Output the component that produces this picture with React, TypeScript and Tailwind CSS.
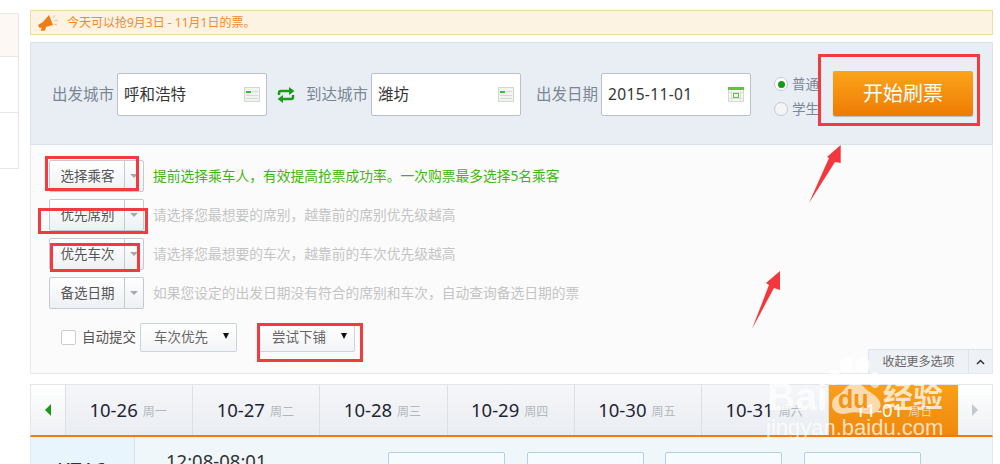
const font = { fontFamily: '"Noto Sans", "Noto Sans CJK SC", sans-serif' };

const FieldIcon = () => (
  <svg width="16" height="15" viewBox="0 0 16 15" className="shrink-0">
    <rect x="0.5" y="0.5" width="15" height="14" fill="#f2f4f0" stroke="#d3d6d3" />
    <rect x="2" y="4" width="5" height="2" fill="#3fb93f" />
    <rect x="8" y="4" width="6" height="1" fill="#d5d9d5" />
    <rect x="2" y="8" width="12" height="1" fill="#d5d9d5" />
    <rect x="2" y="11" width="12" height="1" fill="#d5d9d5" />
  </svg>
);

const CalendarIcon = () => (
  <svg width="16" height="15" viewBox="0 0 16 15" className="shrink-0">
    <rect x="0.5" y="0.5" width="15" height="14" fill="#f5f7f3" stroke="#d5d8d5" />
    <rect x="0" y="0" width="16" height="3" fill="#6dbb4c" />
    <path d="M1 5.500h14M1 11.500h14M3.500 4v10M12.500 4v10" stroke="#dcdfdc" fill="none" />
    <rect x="5.500" y="6.500" width="5" height="4" fill="none" stroke="#6dbb4c" />
  </svg>
);

const SwapIcon = () => (
  <svg width="18" height="16" viewBox="0 0 18 16" className="shrink-0">
    <path d="M2 8V6a2 2 0 0 1 2-2h9" stroke="#1c9a1c" strokeWidth="2.500" fill="none" />
    <path d="M12 0l5.500 4L12 8z" fill="#1c9a1c" />
    <path d="M16 8v2a2 2 0 0 1-2 2H5" stroke="#1c9a1c" strokeWidth="2.500" fill="none" />
    <path d="M6 8l-5.500 4L6 16z" fill="#1c9a1c" />
  </svg>
);

const City = ({ value, icon, wide }: { value: string; icon: React.ReactNode; wide?: boolean }) => (
  <div className="flex h-[43px] w-[150px] shrink-0 items-center justify-between rounded-[2px] border border-[#b9c1cc] bg-white pl-[6px] pr-[6px] text-[15.5px] text-[#333]">
    <span className={wide ? "pt-[1px] tracking-[0.35px]" : "pt-[1px]"}>{value}</span>
    {icon}
  </div>
);

const Label = ({ text }: { text: string }) => (
  <span className="w-[65px] shrink-0 whitespace-nowrap text-[15.5px] text-[#7a8694]">{text}</span>
);

const OptionButton = ({ label }: { label: string }) => (
  <div className="flex h-[32px] w-[95px] shrink-0 items-center rounded-[2px] border border-[#c3cad3] bg-gradient-to-b from-white to-[#eef0f3] text-[13.5px] text-[#555]">
    <span className="w-[74px] pl-[1px] text-center">{label}</span>
    <span className="flex h-full flex-1 items-center justify-center border-l border-[#c3cad3]">
      <span className="h-0 w-0 border-x-[4px] border-t-[4px] border-x-transparent border-t-[#a4a9b0]" />
    </span>
  </div>
);

const OptionRow = ({ label, hint, green }: { label: string; hint: string; green?: boolean }) => (
  <div className="flex h-[32px] shrink-0 items-center gap-[9px]">
    <OptionButton label={label} />
    <span className={green ? "text-[13.75px] text-[#43b312]" : "text-[13.75px] text-[#c4c4c4]"}>{hint}</span>
  </div>
);

const Dropdown = ({ label }: { label: string }) => (
  <div className="flex h-[29px] w-[97px] shrink-0 items-center justify-between rounded-[2px] border border-[#cdd3da] bg-gradient-to-b from-white to-[#f3f4f6] pl-[13px] pr-[7px] text-[13.5px] text-[#666]">
    <span>{label}</span>
    <span className="mb-[3px] h-0 w-0 border-x-[3.500px] border-t-[6px] border-x-transparent border-t-[#111]" />
  </div>
);

const days = [
  ["10-26", "周一"],
  ["10-27", "周二"],
  ["10-28", "周三"],
  ["10-29", "周四"],
  ["10-30", "周五"],
  ["10-31", "周六"],
];

const Mark = ({ className }: { className: string }) => (
  <div className={`absolute border-[3px] border-[#f33a3f] ${className}`} />
);

export default function App() {
  return (
    <div style={font} className="relative flex h-[464px] w-[1000px] overflow-hidden bg-white">
      {/* Left nav edge */}
      <div className="mt-[13px] h-[156px] w-[19px] shrink-0 rounded-tr-[2px] border-b border-r border-t border-[#e6e6e6]">
        <div className="h-[43px] border-b border-[#e6e6e6] bg-[#fdf8f3]" />
        <div className="h-[56px] border-b border-[#e6e6e6]" />
      </div>

      <div className="ml-[11px] flex w-[963px] shrink-0 flex-col pt-[10px]">
        {/* Notice */}
        <div className="flex h-[25px] shrink-0 items-center border border-[#efd9ac] bg-[#fdf3e2] pl-[6px] text-[12px] text-[#f5892b]">
          <svg width="22" height="18" viewBox="0 0 22 18" className="mr-[8px] shrink-0">
            <path d="M1 11 6 8 12 1l4 10-7 2-1 3.500-4 .500 .500-3.500-2 .500z" fill="#ee7d16" />
            <path d="M16 4l2-3M17 7l4-1M17 10l3 1" stroke="#f4c08c" fill="none" />
          </svg>
          今天可以抢9月3日 - 11月1日的票。
        </div>

        {/* Search */}
        <div className="mt-[7px] flex h-[103px] shrink-0 items-center border border-[#dbe1e9] bg-[#e9eef5] pl-[21px] pt-[2px]">
          <Label text="出发城市" />
          <City value="呼和浩特" icon={<FieldIcon />} />
          <span className="ml-[10px] mr-[11px]"><SwapIcon /></span>
          <Label text="到达城市" />
          <City value="潍坊" icon={<FieldIcon />} />
          <span className="w-[15px] shrink-0" />
          <Label text="出发日期" />
          <City wide value="2015-11-01" icon={<CalendarIcon />} />
          <div className="ml-[23px] mt-[4px] flex w-[45px] shrink-0 flex-col gap-[11px] overflow-hidden text-[13.5px] text-[#7a8694]">
            <label className="flex h-[14px] items-center gap-[4px] whitespace-nowrap">
              <span className="flex h-[14px] w-[14px] shrink-0 items-center justify-center rounded-full border border-[#c3c9d1] bg-white">
                <span className="h-[7px] w-[7px] rounded-full bg-[#189a18]" />
              </span>
              普通
            </label>
            <label className="flex h-[14px] items-center gap-[4px] whitespace-nowrap">
              <span className="h-[14px] w-[14px] shrink-0 rounded-full border border-[#c3c9d1] bg-[#f4f5f7]" />
              学生
            </label>
          </div>
          <div className="ml-[14px] mt-[-2px] flex h-[45px] w-[140px] shrink-0 items-center justify-center rounded-[2px] bg-gradient-to-b from-[#fba41a] to-[#ee7b02] text-[20px] text-white shadow-[0_1px_1px_rgba(0,0,0,0.2)]">
            开始刷票
          </div>
        </div>

        {/* Options */}
        <div className="relative flex h-[229px] shrink-0 flex-col gap-[7px] border-x border-b border-[#e6eaef] bg-[#fbfbfb] pl-[18px] pt-[15px]">
          <OptionRow green label="选择乘客" hint="提前选择乘车人，有效提高抢票成功率。一次购票最多选择5名乘客" />
          <OptionRow label="优先席别" hint="请选择您最想要的席别，越靠前的席别优先级越高" />
          <OptionRow label="优先车次" hint="请选择您最想要的车次，越靠前的车次优先级越高" />
          <OptionRow label="备选日期" hint="如果您设定的出发日期没有符合的席别和车次，自动查询备选日期的票" />
          <div className="mt-[7px] flex items-center pl-[12px]">
            <span className="h-[15px] w-[15px] shrink-0 rounded-[2px] border border-[#c9ced5] bg-white" />
            <span className="ml-[6px] w-[58px] shrink-0 whitespace-nowrap text-[13.5px] text-[#555]">自动提交</span>
            <Dropdown label="车次优先" />
            <span className="w-[21px] shrink-0" />
            <Dropdown label="尝试下铺" />
          </div>
          <div className="absolute bottom-0 right-0 flex h-[24px] items-center border-l border-t border-[#dfe4ea] bg-[#eef1f5] text-[12px] text-[#666]">
            <span className="flex w-[99px] justify-center">收起更多选项</span>
            <span className="flex h-full w-[24px] items-center justify-center border-l border-[#dfe4ea]">
              <svg width="9" height="6" viewBox="0 0 9 6">
                <path d="M1 5l3.500-3.500L8 5" stroke="#333" strokeWidth="1.500" fill="none" />
              </svg>
            </span>
          </div>
        </div>

        {/* Date strip */}
        <div className="mt-[10px] flex h-[53px] shrink-0 border-x border-b-2 border-t border-[#e3e7ec] border-b-[#f17a0a] bg-gradient-to-b from-[#f5f6f8] to-[#eaedf2]">
          <div className="flex w-[35px] shrink-0 items-center justify-center border-r border-[#dce0e5] bg-gradient-to-b from-white to-[#eff1f4]">
            <span className="h-0 w-0 border-y-[6px] border-r-[6px] border-y-transparent border-r-[#189a18]" />
          </div>
          {days.map(([date, week]) => (
            <div key={date} className="flex w-[127.200px] shrink-0 items-center justify-center gap-[5px] border-r border-[#dce0e5] pr-[2px]">
              <span className="text-[18.5px] text-[#1f2535]">{date}</span>
              <span className="pt-[3px] text-[12px] text-[#b3b7bd]">{week}</span>
            </div>
          ))}
          <div className="flex w-[129px] shrink-0 items-center justify-center gap-[5px] bg-gradient-to-b from-[#f9a01a] to-[#f0880c] text-white">
            <span className="text-[18.5px]">11-01</span>
            <span className="pt-[3px] text-[12px] text-[#fbd49a]">周日</span>
          </div>
          <div className="flex flex-1 items-center justify-center bg-gradient-to-b from-white to-[#eff1f4]">
            <span className="h-0 w-0 border-y-[6px] border-l-[6px] border-y-transparent border-l-[#c3c8ce]" />
          </div>
        </div>

        {/* Result row, cut by the window */}
        <div className="flex h-[60px] shrink-0 border-x border-[#dfe9f0] bg-[#eff7fb]">
          <div className="w-[104px] shrink-0 border-r border-[#d3e3ef] bg-[#e9f5fc] pl-[26px] pt-[19px] text-[21px] text-[#2a3040]">
            K716
          </div>
          <div className="w-[253px] shrink-0 pl-[31px] pt-[12px] text-[18.5px] leading-[24px] text-[#333]">12:08-08:01</div>
          <div className="flex gap-[21.500px] pt-[15px]">
            {[0, 1, 2, 3].map((i) => (
              <div key={i} className="h-[40px] w-[117px] rounded-[2px] border border-[#afd0e6] bg-[#f5fbfe]" />
            ))}
          </div>
        </div>
      </div>

      {/* Annotations drawn over the screenshot */}
      <Mark className="left-[818px] top-[54px] h-[72px] w-[162px]" />
      <Mark className="left-[45px] top-[156px] h-[35px] w-[94px]" />
      <Mark className="left-[38px] top-[208px] h-[26px] w-[110px]" />
      <Mark className="left-[50px] top-[243px] h-[29px] w-[90px]" />
      <Mark className="left-[257px] top-[323px] h-[39px] w-[106px]" />
      <svg viewBox="0 0 1000 464" className="pointer-events-none absolute left-0 top-0 h-[464px] w-[1000px]">
        <polygon points="840.700,145 827,157 829,158 809,203 835,162 840.700,163" fill="#f5363c" />
        <polygon points="780,271 766,283 769,285 752,329 774,288 780,290" fill="#f5363c" />
        {/* Paw of the watermark */}
        <g fill="#fff" fillOpacity="0.65">
          <ellipse cx="834" cy="377" rx="6" ry="8" />
          <ellipse cx="846.500" cy="365" rx="6.500" ry="8" />
          <ellipse cx="862.500" cy="365" rx="7.500" ry="8" />
          <ellipse cx="875" cy="380" rx="5.500" ry="8" />
          <path d="M832 404c0-8 8-9 12-14 4-7 14-9 20-3 4 5 10 6 15 13 5 8-3 15-12 14-6-1-12-3-18-1-9 3-17-1-17-9z" />
        </g>
      </svg>
      <span className="pointer-events-none absolute left-[838px] top-[384px] text-[25px] font-bold leading-[30px] text-[#f49412]" style={{ fontFamily: '"Liberation Sans", sans-serif' }}>du</span>
      <span className="pointer-events-none absolute left-[767px] top-[374px] text-[39px] font-bold leading-[46px] text-white/75" style={{ fontFamily: '"Liberation Sans", sans-serif' }}>Bai</span>
      <span className="pointer-events-none absolute left-[883px] top-[376px] text-[30px] font-bold leading-[40px] text-white/75">经验</span>
      <span className="pointer-events-none absolute left-[766px] top-[415px] text-[22px] leading-[26px] text-white/75" style={{ fontFamily: '"Liberation Sans", sans-serif' }}>jingyan.baidu.com</span>
    </div>
  );
}
